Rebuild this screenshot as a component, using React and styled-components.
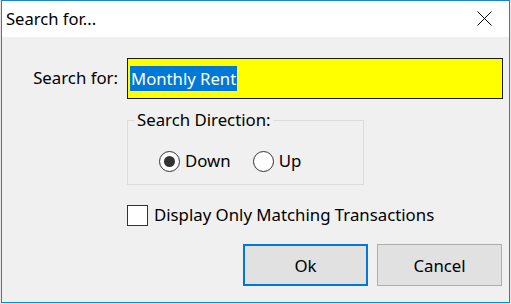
import styled, { createGlobalStyle } from "styled-components";

const Global = createGlobalStyle`
  html, body {
    margin: 0;
    padding: 0;
    background: #e6e6e6;
  }
  body {
    font-family: "Noto Sans", "Open Sans", sans-serif;
    color: #000;
  }
`;

const Screen = styled.div`
  width: 511px;
  height: 304px;
  padding: 0 1px 1px 1px;
  box-sizing: border-box;
`;

const Window = styled.div`
  width: 509px;
  height: 303px;
  box-sizing: border-box;
  border: 1px solid #1883d7;
  background: #f0f0f0;
  display: flex;
  flex-direction: column;
`;

const TitleBar = styled.div`
  height: 36px;
  background: #fff;
  display: flex;
  align-items: center;
  justify-content: space-between;
  padding: 0 0 1px 4px;
  box-sizing: border-box;
  font-size: 16.6px;
`;

const CloseBox = styled.div`
  width: 46px;
  height: 35px;
  display: flex;
  align-items: center;
  justify-content: center;
  margin-right: 2px;
`;

const Body = styled.div`
  flex: 1;
  display: flex;
  flex-direction: column;
  padding: 21px 6px 0 0;
  font-size: 16.8px;
`;

const SearchRow = styled.div`
  display: flex;
  align-items: center;
  height: 41px;
`;

const Label = styled.label`
  width: 116px;
  text-align: right;
  padding-right: 9px;
  padding-bottom: 2px;
`;

const InputBox = styled.div`
  flex: 1;
  height: 41px;
  box-sizing: border-box;
  border: 1px solid #1a1a1a;
  background: #ffff00;
  display: flex;
  align-items: center;
  padding: 0 0 1px 2px;
`;

const Selected = styled.span`
  background: #0078d7;
  color: #fff;
  font-size: 16.7px;
  line-height: 25px;
  padding: 0 1px;
`;

const Group = styled.div`
  position: relative;
  margin: 21px 0 0 125px;
  width: 237px;
  height: 65px;
  box-sizing: border-box;
  border: 1px solid #dcdcdc;
  display: flex;
  align-items: flex-start;
  padding: 29px 0 0 31px;
  gap: 22px;
`;

const Legend = styled.span`
  position: absolute;
  top: -12px;
  left: 7px;
  padding: 0 2px;
  background: #f0f0f0;
  line-height: 22px;
`;

const Option = styled.label`
  display: flex;
  align-items: center;
  gap: 5px;
  line-height: 22px;
`;

const Radio = styled.span`
  width: 21px;
  height: 21px;
  box-sizing: border-box;
  border-radius: 50%;
  border: 1px solid #333;
  background: #fff;
  display: flex;
  align-items: center;
  justify-content: center;

  &::after {
    content: "";
    width: 11px;
    height: 11px;
    border-radius: 50%;
    background: #333;
    display: ${({ $on }) => ($on ? "block" : "none")};
  }
`;

const CheckRow = styled.div`
  display: flex;
  align-items: center;
  gap: 6px;
  margin: 19px 0 0 125px;
  line-height: 22px;
`;

const CheckBox = styled.span`
  width: 21px;
  height: 21px;
  box-sizing: border-box;
  border: 1px solid #333;
  background: #fff;
`;

const Buttons = styled.div`
  display: flex;
  justify-content: flex-end;
  gap: 9px;
  margin-top: 18px;
  padding-right: 1px;
`;

const Button = styled.button`
  width: 125px;
  height: 42px;
  box-sizing: border-box;
  background: #e1e1e1;
  border: ${({ $primary }) => ($primary ? "2px solid #0078d7" : "1px solid #adadad")};
  font-family: inherit;
  font-size: 16.8px;
  color: #000;
  padding: 0;
`;

export default function App() {
  return (
    <Screen>
      <Global />
      <Window>
        <TitleBar>
          <span>Search for...</span>
          <CloseBox>
            <svg width="15" height="15" viewBox="0 0 15 15">
              <path d="M0.5 0.5 L14.5 14.5 M14.5 0.5 L0.5 14.5" stroke="#000" strokeWidth="1" />
            </svg>
          </CloseBox>
        </TitleBar>
        <Body>
          <SearchRow>
            <Label>Search for:</Label>
            <InputBox>
              <Selected>Monthly Rent</Selected>
            </InputBox>
          </SearchRow>
          <Group>
            <Legend>Search Direction:</Legend>
            <Option>
              <Radio $on />
              Down
            </Option>
            <Option>
              <Radio />
              Up
            </Option>
          </Group>
          <CheckRow>
            <CheckBox />
            <span>Display Only Matching Transactions</span>
          </CheckRow>
          <Buttons>
            <Button $primary>Ok</Button>
            <Button>Cancel</Button>
          </Buttons>
        </Body>
      </Window>
    </Screen>
  );
}
